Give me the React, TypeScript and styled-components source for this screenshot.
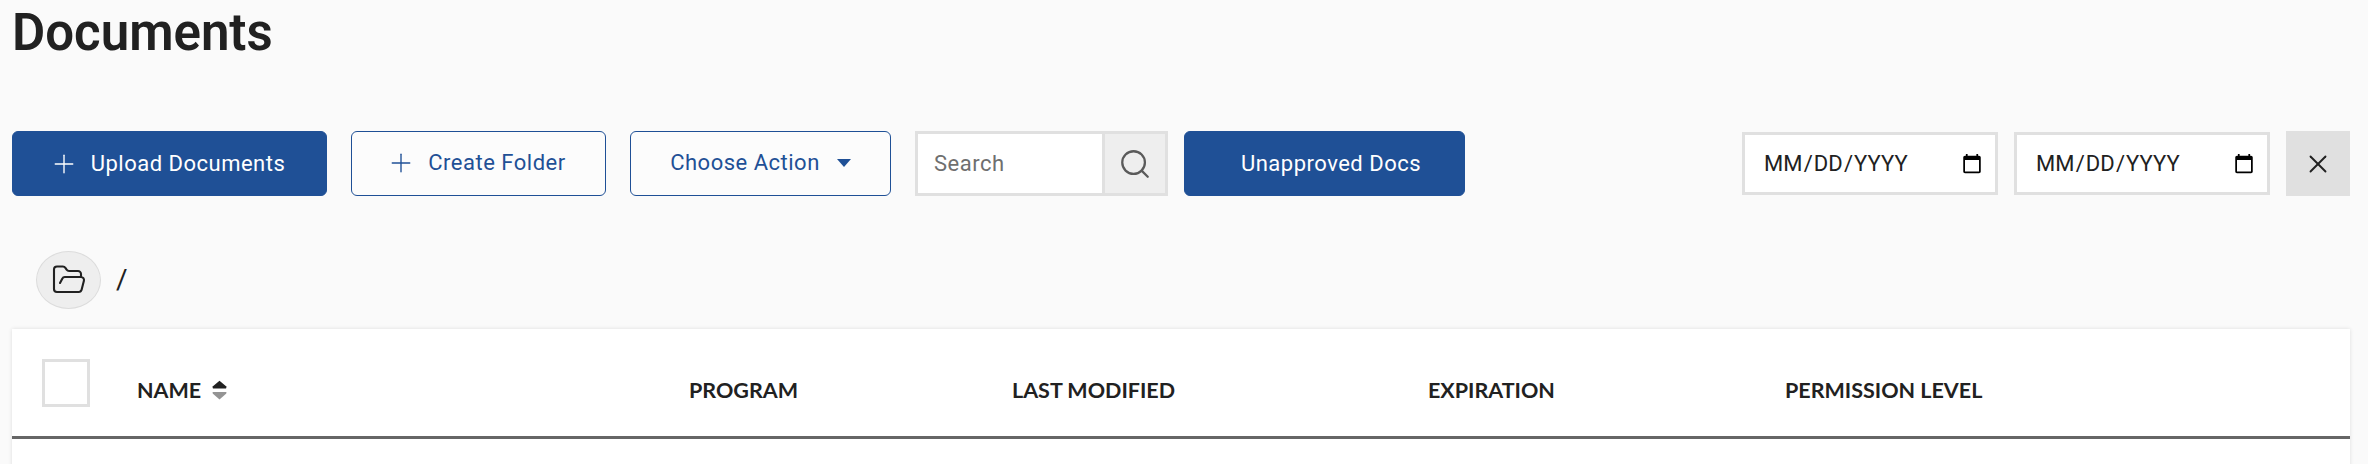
import { createGlobalStyle, styled } from 'styled-components';
import { FolderOpen, Plus, Search, X } from 'lucide-react';

const GlobalStyle = createGlobalStyle`
  html, body {
    margin: 0;
    background: #fafafa;
    font-family: Roboto, "Liberation Sans", sans-serif;
    color: #212121;
  }
`;

const Page = styled.div`
  height: 464px;
  padding: 0 18px 0 12px;
  overflow: hidden;
  box-sizing: border-box;
`;

const Title = styled.h1`
  margin: 0;
  height: 131px;
  font-size: 51px;
  line-height: 66px;
  font-weight: 600;
  color: #212121;
`;

const Toolbar = styled.div`
  display: flex;
  align-items: flex-start;
  height: 65px;
`;

const Button = styled.button<{ $outlined?: boolean; $width: number; $after?: number; $shift?: number; $endPad?: number }>`
  display: flex;
  align-items: center;
  justify-content: center;
  gap: 12px;
  box-sizing: border-box;
  width: ${(p) => p.$width}px;
  height: 65px;
  margin-right: ${(p) => p.$after ?? 24}px;
  padding: 0 ${(p) => p.$endPad ?? 0}px ${(p) => (p.$outlined ? 2 : 0)}px ${(p) => p.$shift ?? 0}px;
  border: 1px solid #1f5096;
  border-radius: 6px;
  background: ${(p) => (p.$outlined ? '#fcfcfc' : '#1f5096')};
  color: ${(p) => (p.$outlined ? '#1f5096' : '#ffffff')};
  font-family: Roboto, sans-serif;
  font-size: 22px;
  font-weight: 400;
  letter-spacing: 0.5px;
`;

const Caret = styled.span`
  width: 0;
  height: 0;
  margin-left: 5px;
  border-left: 7px solid transparent;
  border-right: 7px solid transparent;
  border-top: 8px solid #1f5096;
`;

const SearchBox = styled.div`
  display: flex;
  box-sizing: border-box;
  width: 253px;
  height: 65px;
  margin-right: 16px;
  border: 3px solid #e0e0e0;
`;

const SearchInput = styled.input`
  flex: 1;
  min-width: 0;
  box-sizing: border-box;
  padding: 0 0 0 16px;
  border: 0;
  outline: 0;
  background: #fff;
  font-family: Roboto, sans-serif;
  font-size: 22px;
  letter-spacing: 0.5px;
  color: #212121;

  &::placeholder {
    color: #6f6f6f;
    opacity: 1;
  }
`;

const SearchAddon = styled.div`
  display: flex;
  align-items: center;
  justify-content: center;
  width: 60px;
  border-left: 3px solid #e0e0e0;
  background: #eeeeee;
  color: #5a5a5a;
`;

const Spacer = styled.div`
  flex: 1;
`;

const DateInput = styled.input`
  box-sizing: border-box;
  width: 256px;
  height: 63px;
  margin: 1px 16px 0 0;
  padding: 0 10px 0 18px;
  border: 3px solid #e0e0e0;
  border-radius: 0;
  outline: 0;
  background: #fff;
  font-family: Roboto, sans-serif;
  font-size: 22px;
  letter-spacing: 0.1px;
  text-transform: uppercase;
  color: #212121;
`;

const ClearButton = styled.button`
  display: flex;
  align-items: center;
  justify-content: center;
  width: 64px;
  height: 65px;
  padding: 0;
  border: 0;
  background: #e0e0e0;
  color: #212121;
`;

const Breadcrumb = styled.div`
  display: flex;
  align-items: flex-start;
  gap: 15px;
  box-sizing: border-box;
  height: 133px;
  padding: 55px 0 0 24px;
`;

const FolderCircle = styled.div`
  display: flex;
  align-items: center;
  justify-content: center;
  box-sizing: border-box;
  width: 65px;
  height: 58px;
  border: 1px solid #dcdcdc;
  border-radius: 50%;
  background: #eeeeee;
  color: #212121;
`;

const Slash = styled.span`
  font-size: 28px;
  line-height: 58px;
  color: #212121;
`;

const Table = styled.div`
  height: 200px;
  background: #fff;
  box-shadow: 0 0 4px rgba(0, 0, 0, 0.12);
`;

const HeaderRow = styled.div`
  display: grid;
  grid-template-columns: 95px 552px 323px 416px 357px 1fr;
  align-items: center;
  box-sizing: border-box;
  height: 110px;
  padding: 14px 0 0 30px;
  border-bottom: 3px solid #666666;
`;

const Checkbox = styled.span`
  display: block;
  box-sizing: border-box;
  width: 48px;
  height: 48px;
  margin-top: -14px;
  border: 3px solid #e0e0e0;
  background: #fff;
`;

const HeaderCell = styled.div`
  display: flex;
  align-items: center;
  gap: 11px;
  font-family: Lato, "Noto Sans", sans-serif;
  font-size: 21.5px;
  font-weight: 700;
  color: #212121;
`;

const SortIcon = () => (
  <svg width="15" height="20" viewBox="0 0 16 20">
    <path d="M8 0 L15 6 Q16 8.500 14 8.500 L2 8.500 Q0 8.500 1 6 Z" fill="#212121" />
    <path d="M1 12 L15 12 Q16 12 15 14 L8 20 L1 14 Q0 12 1 12 Z" fill="#949494" />
  </svg>
);

const columns = ['PROGRAM', 'LAST MODIFIED', 'EXPIRATION', 'PERMISSION LEVEL'];

const App = () => (
  <>
    <GlobalStyle />
    <Page>
      <Title>Documents</Title>
      <Toolbar>
        <Button $width={315} $endPad={5}>
          <Plus size={30} strokeWidth={1.1} />
          Upload Documents
        </Button>
        <Button $outlined $width={255} $endPad={5}>
          <Plus size={30} strokeWidth={1.1} />
          Create Folder
        </Button>
        <Button $outlined $width={261}>
          Choose Action
          <Caret />
        </Button>
        <SearchBox>
          <SearchInput placeholder="Search" />
          <SearchAddon>
            <Search size={34} strokeWidth={1.6} />
          </SearchAddon>
        </SearchBox>
        <Button $width={281} $after={0} $shift={13}>
          Unapproved Docs
        </Button>
        <Spacer />
        <DateInput type="date" />
        <DateInput type="date" />
        <ClearButton>
          <X size={30} strokeWidth={1.5} />
        </ClearButton>
      </Toolbar>
      <Breadcrumb>
        <FolderCircle>
          <FolderOpen size={36} strokeWidth={1.4} />
        </FolderCircle>
        <Slash>/</Slash>
      </Breadcrumb>
      <Table>
        <HeaderRow>
          <Checkbox />
          <HeaderCell>
            NAME
            <SortIcon />
          </HeaderCell>
          {columns.map((column) => (
            <HeaderCell key={column}>{column}</HeaderCell>
          ))}
        </HeaderRow>
      </Table>
    </Page>
  </>
);

export default App;
